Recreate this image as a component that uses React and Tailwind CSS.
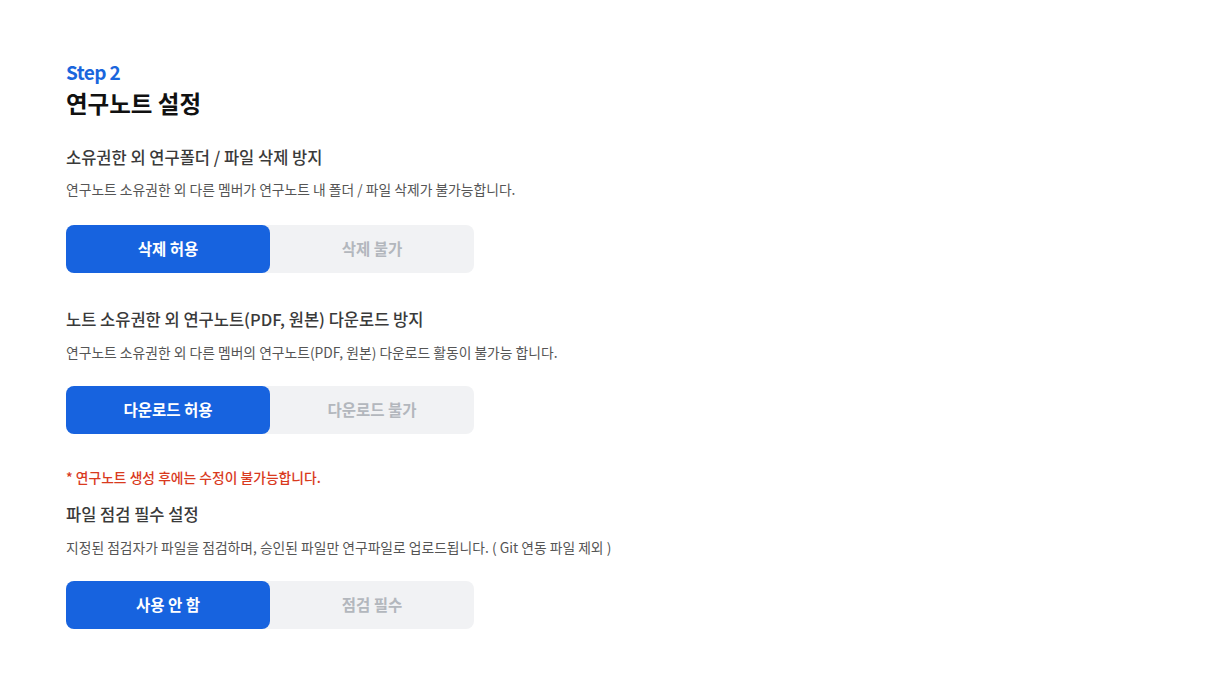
import React from "react";

const font = { fontFamily: '"Noto Sans CJK KR", "Noto Sans", sans-serif' };

function Toggle({ on, off }) {
  return (
    <div className="flex w-[408px] h-[48px] rounded-[8px] bg-[#f1f2f4]">
      <div className="flex w-[204px] items-center justify-center rounded-[8px] bg-[#1763df] text-[15.5px] font-bold text-white">
        {on}
      </div>
      <div className="flex flex-1 items-center justify-center text-[15.5px] font-bold text-[#b3b7bd]">
        {off}
      </div>
    </div>
  );
}

export default function App() {
  return (
    <div className="min-h-[680px] w-full bg-white pl-[66px] pt-[60px]" style={font}>
      <div className="text-[19px] font-bold leading-[24px] text-[#1a66dd] tracking-[-0.6px]">Step 2</div>
      <div className="mt-[3px] text-[23.5px] font-bold leading-[32px] text-[#111]">연구노트 설정</div>

      <div className="mt-[26px] text-[16.5px] font-medium leading-[24px] text-[#3a3a3a]">소유권한 외 연구폴더 / 파일 삭제 방지</div>
      <div className="mt-[10px] text-[13.8px] leading-[20px] text-[#555]">연구노트 소유권한 외 다른 멤버가 연구노트 내 폴더 / 파일 삭제가 불가능합니다.</div>
      <div className="mt-[26px]">
        <Toggle on="삭제 허용" off="삭제 불가" />
      </div>

      <div className="mt-[34px] text-[16.5px] font-medium leading-[24px] text-[#3a3a3a]">노트 소유권한 외 연구노트(PDF, 원본) 다운로드 방지</div>
      <div className="mt-[11px] text-[13.8px] leading-[20px] text-[#555]">연구노트 소유권한 외 다른 멤버의 연구노트(PDF, 원본) 다운로드 활동이 불가능 합니다.</div>
      <div className="mt-[24px]">
        <Toggle on="다운로드 허용" off="다운로드 불가" />
      </div>

      <div className="mt-[34px] text-[13.8px] font-medium leading-[18px] text-[#d93a1e]">* 연구노트 생성 후에는 수정이 불가능합니다.</div>
      <div className="mt-[16px] text-[16.5px] font-medium leading-[24px] text-[#3a3a3a]">파일 점검 필수 설정</div>
      <div className="mt-[11px] text-[13.8px] leading-[20px] text-[#555]">지정된 점검자가 파일을 점검하며, 승인된 파일만 연구파일로 업로드됩니다. ( Git 연동 파일 제외 )</div>
      <div className="mt-[24px]">
        <Toggle on="사용 안 함" off="점검 필수" />
      </div>
    </div>
  );
}
